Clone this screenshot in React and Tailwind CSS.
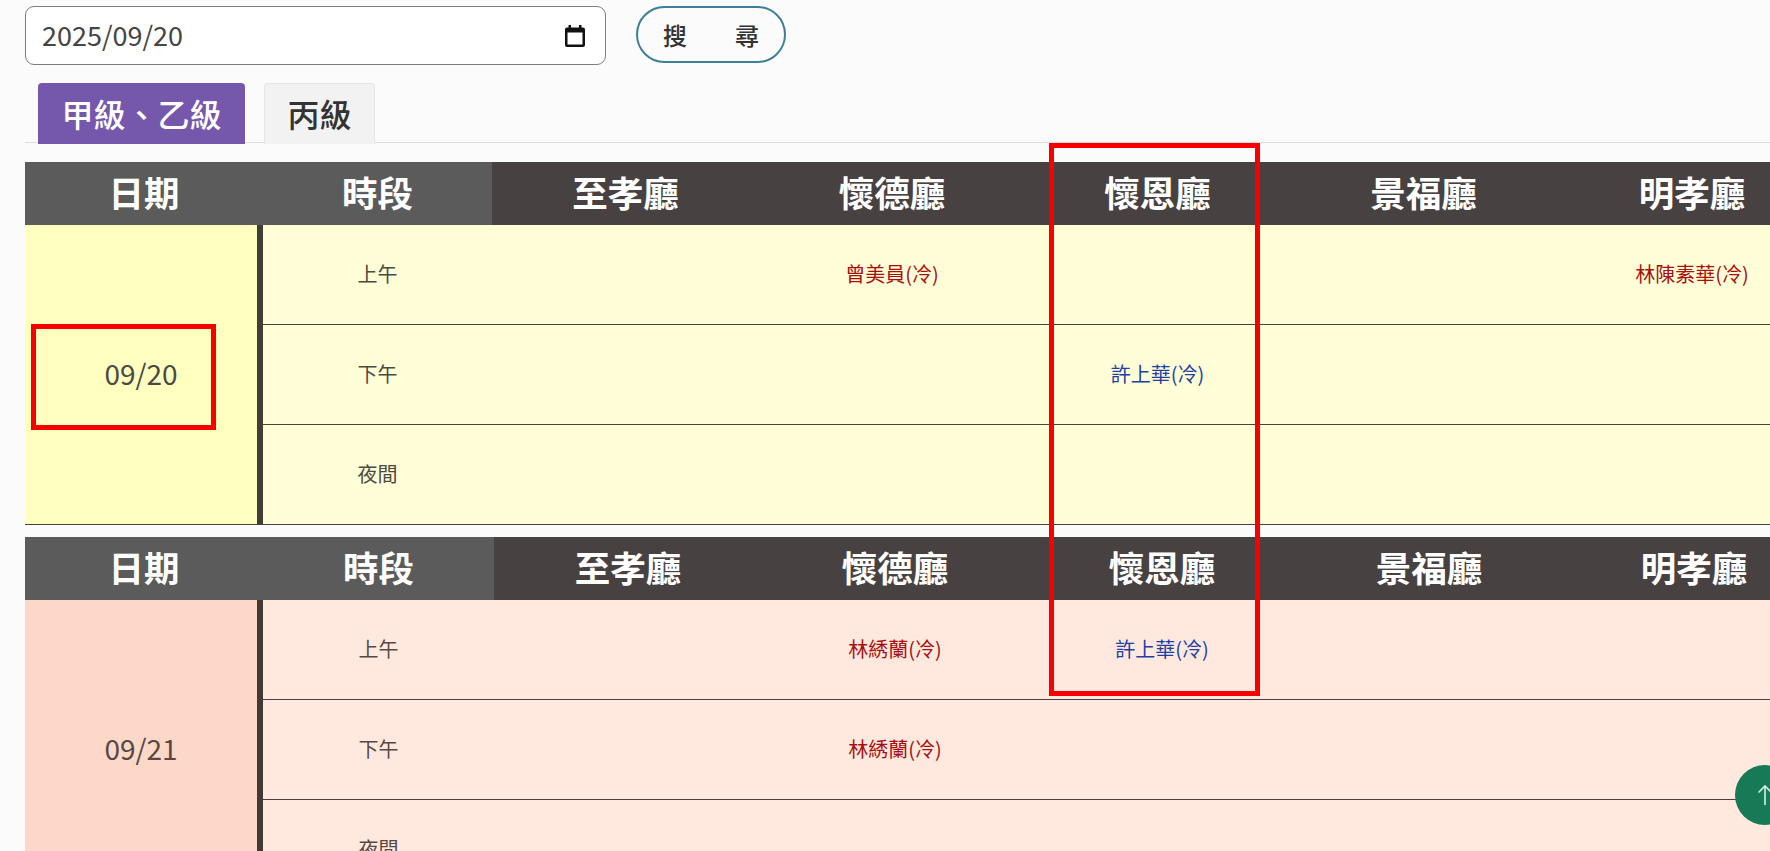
const CJK = '"Noto Sans CJK TC", "Noto Sans", sans-serif';
const halls = ["至孝廳", "懷德廳", "懷恩廳", "景福廳", "明孝廳"];

function Head({ widths }) {
  const titles = ["日期", "時段", ...halls];
  return (
    <thead>
      <tr className="h-[63px]">
        {titles.map((t, i) => (
          <th
            key={t}
            style={{ width: widths[i] }}
            className={`p-0 pb-[3px] text-center align-middle text-[35.5px] leading-none font-bold text-white ${i < 2 ? "bg-[#5b5b5b]" : "bg-[#484141]"}`}
          >
            {t}
          </th>
        ))}
      </tr>
    </thead>
  );
}

function Day({ date, rows, widths, dateBg, rowBg, ink, line, bar }) {
  return (
    <table className="table-fixed border-separate border-spacing-0" style={{ width: widths.reduce((a, b) => a + b, 0) }}>
      <Head widths={widths} />
      <tbody>
        {rows.map((r, ri) => (
          <tr key={r.t} className="h-[100px]">
            {ri === 0 && (
              <td
                rowSpan={3}
                className={`border-r-[6px] border-b p-0 pb-[3px] text-center align-middle text-[28px] ${dateBg} ${ink} ${bar} ${line}`}
              >
                {date}
              </td>
            )}
            <td className={`border-b p-0 pb-[2px] text-center align-middle text-[20px] ${rowBg} ${ink} ${line}`}>{r.t}</td>
            {r.c.map((c, i) => (
              <td
                key={i}
                className={`border-b p-0 pb-[2px] text-center align-middle text-[20px] ${rowBg} ${line} ${c && c[1] === "b" ? "text-[#1e3fa6]" : "text-[#a80f0f]"}`}
              >
                {c ? c[0] : ""}
              </td>
            ))}
          </tr>
        ))}
      </tbody>
    </table>
  );
}

const d1 = [
  { t: "上午", c: [null, ["曾美員(冷)", "r"], null, null, ["林陳素華(冷)", "r"]] },
  { t: "下午", c: [null, null, ["許上華(冷)", "b"], null, null] },
  { t: "夜間", c: [null, null, null, null, null] },
];
const d2 = [
  { t: "上午", c: [null, ["林綉蘭(冷)", "r"], ["許上華(冷)", "b"], null, null] },
  { t: "下午", c: [null, ["林綉蘭(冷)", "r"], null, null, null] },
  { t: "夜間", c: [null, null, null, null, null] },
];

export default function App() {
  return (
    <div className="relative h-[851px] w-[1770px] overflow-hidden bg-[#fbfbfb] pl-[25px]" style={{ fontFamily: CJK }}>
      <div className="flex h-[64px] items-start gap-[30px] pt-[6px]">
        <div className="flex h-[59px] w-[581px] items-center justify-between rounded-[9px] border border-[#7d7d7d] bg-white pr-[20px] pl-[16px] text-[27px] text-[#454545]">
          <span>2025/09/20</span>
          <svg width="20" height="22" viewBox="0 0 20 22" aria-hidden="true">
            <path fill="#111" d="M3.500 0h2.500v2.500h8V0h2.500v2.500H18A2 2 0 0 1 20 4.500V20a2 2 0 0 1-2 2H2a2 2 0 0 1-2-2V4.500a2 2 0 0 1 2-2h1.500V0zM2.500 7.500V19.500h15V7.500h-15z" />
          </svg>
        </div>
        <button className="flex h-[57px] w-[150px] items-center justify-center rounded-full border-2 border-[#3d7f96] bg-[#fbfbfb] text-[24px] font-medium text-[#333]">
          搜　　尋
        </button>
      </div>

      <div className="mt-[19px] flex h-[60px] gap-[19px] border-b border-[#dedede] pl-[13px]">
        <div className="flex h-[61px] w-[207px] items-center justify-center rounded-t-[4px] bg-[#7558ab] pb-[2px] text-[32px] font-medium text-white">
          甲級、乙級
        </div>
        <div className="flex h-[61px] w-[111px] items-center justify-center rounded-t-[4px] border border-b-0 border-[#e6e6e6] bg-[#f2f2f2] pb-[2px] text-[32px] font-medium text-[#333]">
          丙級
        </div>
      </div>

      <div className="mt-[19px] flex w-[1900px] flex-col gap-[12px]">
        <Day
          date="09/20"
          rows={d1}
          widths={[238, 229, 267, 266, 265, 267, 270]}
          dateBg="bg-[#ffffc0]"
          rowBg="bg-[#fffed6]"
          ink="text-[#4a4a42]"
          line="border-b-[#44443a]"
          bar="border-r-[#3f3f38]"
        />
        <Day
          date="09/21"
          rows={d2}
          widths={[238, 231, 268, 266, 268, 266, 264]}
          dateBg="bg-[#fdd8c8]"
          rowBg="bg-[#ffe9df]"
          ink="text-[#564945]"
          line="border-b-[#4a3f3c]"
          bar="border-r-[#433a38]"
        />
      </div>

      <div className="pointer-events-none absolute top-[324px] left-[31px] h-[106px] w-[185px] border-[5px] border-[#f70000]" />
      <div className="pointer-events-none absolute top-[143px] left-[1049px] h-[553px] w-[211px] border-[5px] border-[#f70000]" />

      <div className="absolute top-[765px] left-[1735px] flex h-[60px] w-[60px] items-center justify-center rounded-full bg-[#157a55]">
        <svg width="24" height="24" viewBox="0 0 24 24" fill="none" stroke="#d8f0e4" strokeWidth="1.600" aria-hidden="true">
          <path d="M12 22V3M5.500 9.500 12 3l6.500 6.500" />
        </svg>
      </div>
    </div>
  );
}
